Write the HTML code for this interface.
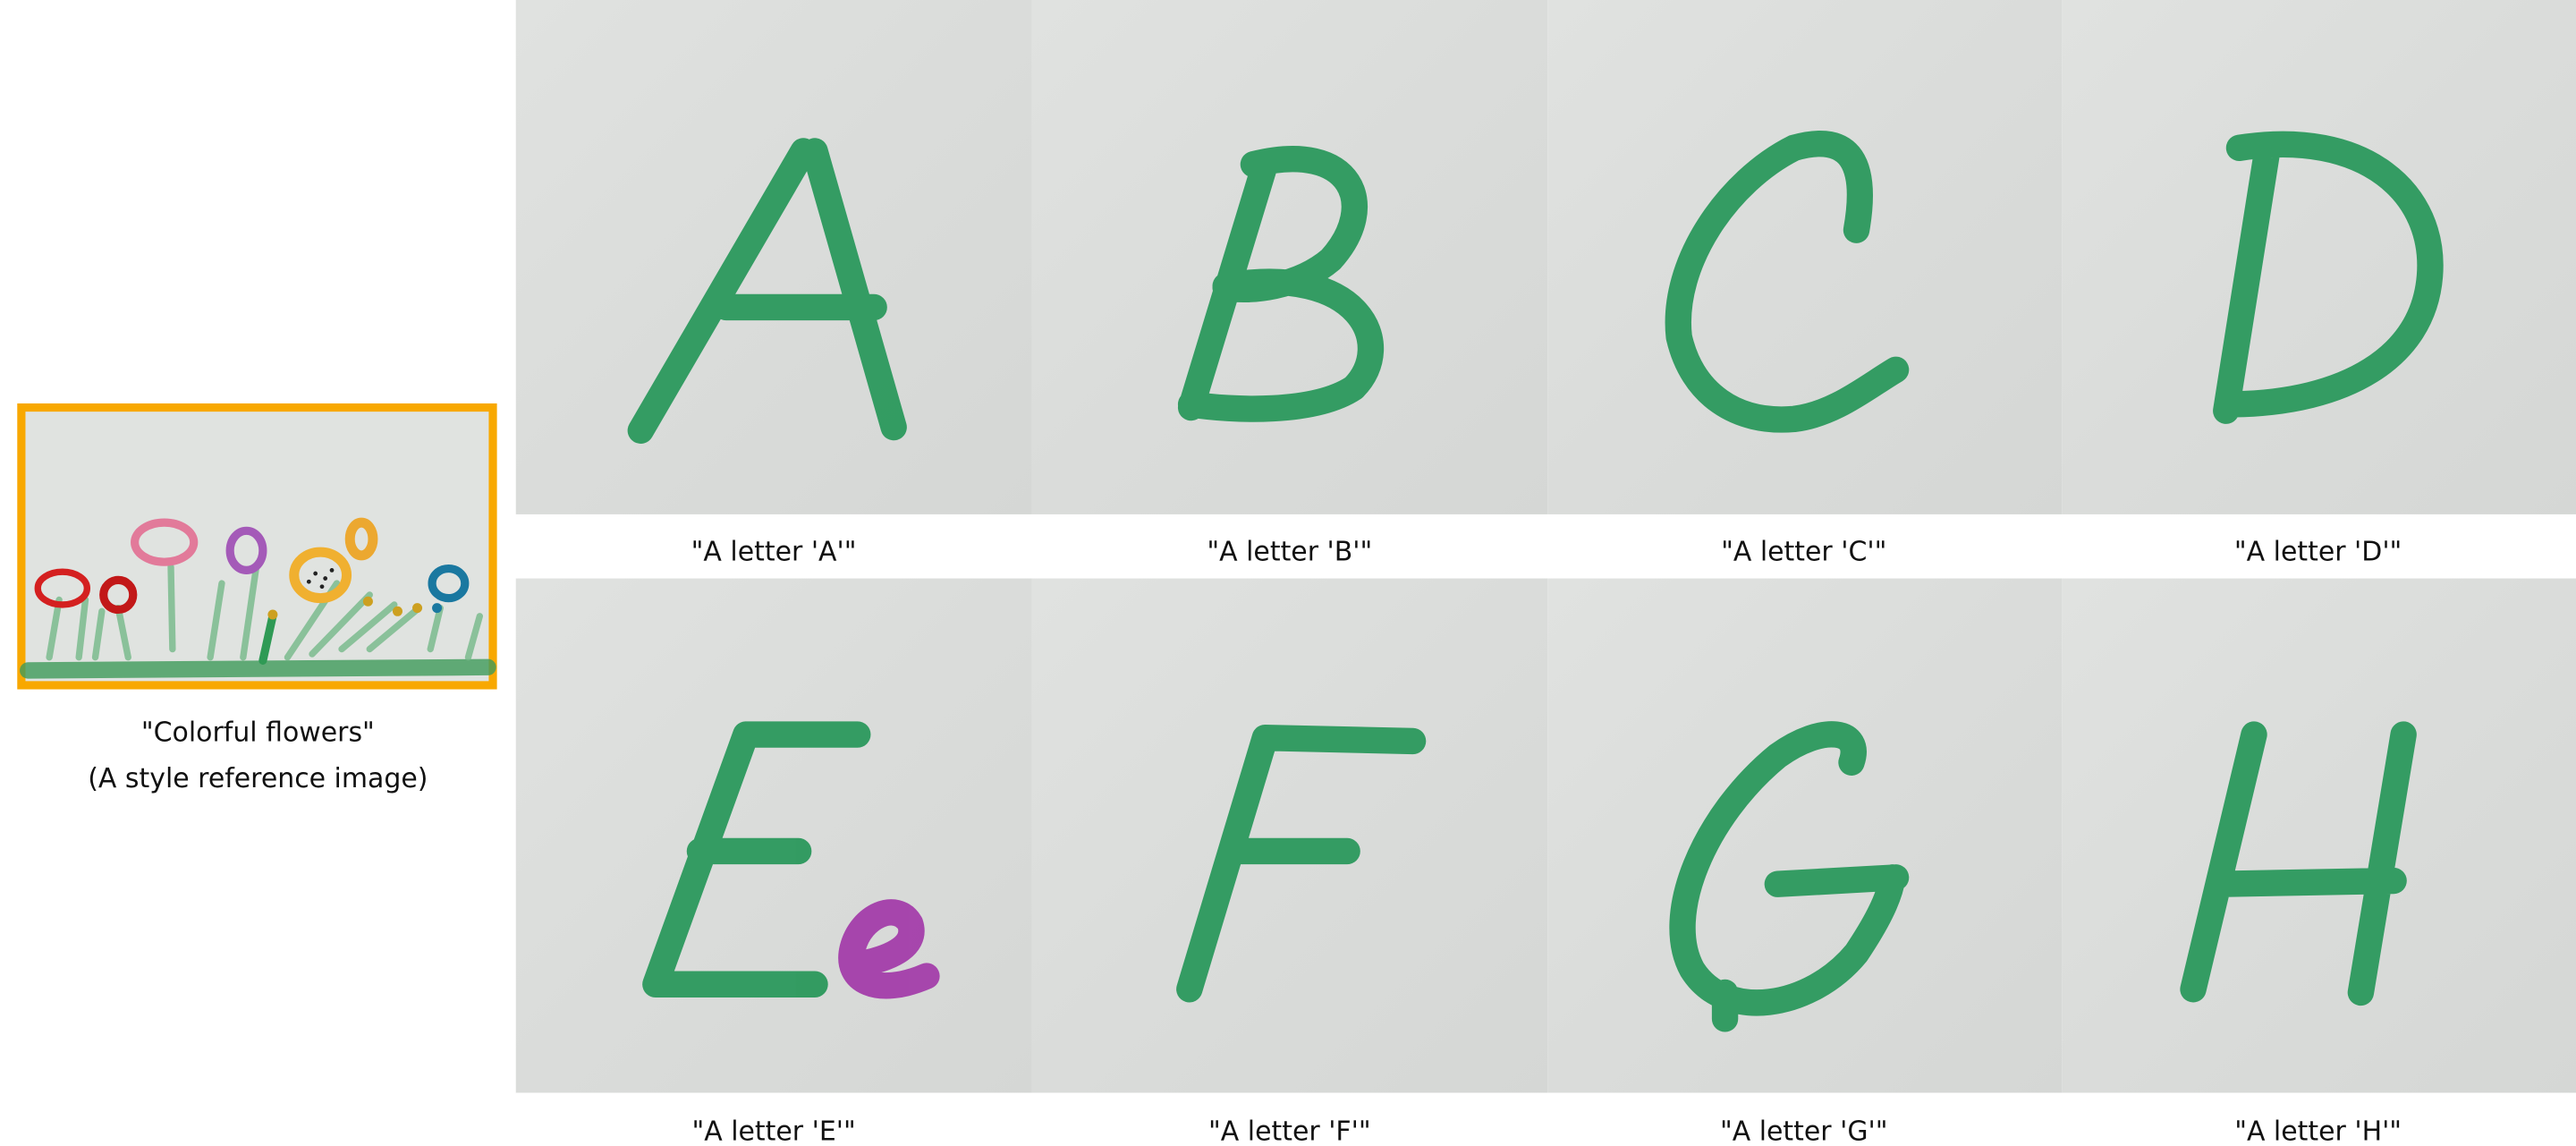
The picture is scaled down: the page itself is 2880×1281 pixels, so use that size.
<!DOCTYPE html>
<html><head><meta charset="utf-8"><style>
html,body{margin:0;padding:0;background:#fff;width:2880px;height:1281px;overflow:hidden}
svg{display:block}
text{font-family:"DejaVu Sans","Liberation Sans",sans-serif;font-size:16.3px;fill:#111}
.g{fill:none;stroke:#279759;stroke-width:16;stroke-linecap:round;stroke-linejoin:round;opacity:.93}
</style></head><body>
<svg width="2880" height="1281" viewBox="0 0 1568 697.4" preserveAspectRatio="none">
<defs>
<linearGradient id="pap" x1="0" y1="0" x2="1" y2="1"><stop offset="0" stop-color="#e0e2e0"/><stop offset=".5" stop-color="#dadcda"/><stop offset="1" stop-color="#d5d7d5"/></linearGradient>
</defs>
<g fill="url(#pap)">
<rect x="314" y="0" width="314" height="313"/><rect x="628" y="0" width="314" height="313"/><rect x="942" y="0" width="313" height="313"/><rect x="1255" y="0" width="313" height="313"/>
<rect x="314" y="352" width="314" height="313"/><rect x="628" y="352" width="314" height="313"/><rect x="942" y="352" width="313" height="313"/><rect x="1255" y="352" width="313" height="313"/>
</g>
<g class="g" transform="translate(314,0)">
<path d="M175,92 L76,262 M182,92 L230,260 M128,187 L218,187"/></g>
<g class="g" transform="translate(628,0)">
<path d="M142,100 L97,248 M135,100 C195,85 212,125 182,158 C162,175 132,178 118,175 M118,174 C200,160 222,210 196,236 C172,252 122,250 97,246"/></g>
<g class="g" transform="translate(942,0)">
<path d="M188,140 C195,100 185,80 150,90 C110,110 75,160 80,205 C88,240 115,258 150,255 C175,252 195,235 212,225"/></g>
<g class="g" transform="translate(1255,0)">
<path d="M125,92 L100,250 M108,90 C185,78 228,118 224,168 C220,218 172,245 105,246"/></g>
<g class="g" transform="translate(314,352)">
<path d="M140,95 L85,247 M140,95 L208,95 M112,166 L172,166 M85,247 L182,247"/>
<path d="M208,235 C225,232 245,225 240,210 C232,196 210,205 205,225 C200,245 220,255 250,242" style="stroke:#a33aa9"/></g>
<g class="g" transform="translate(628,352)">
<path d="M142,97 L96,250 M142,97 L232,99 M122,166 L192,166"/></g>
<g class="g" transform="translate(942,352)">
<path d="M185,112 C192,92 168,88 140,108 C95,145 70,205 88,238 C108,270 160,262 188,228 C200,210 208,195 210,182 M140,186 L212,182 M108,252 L108,268"/></g>
<g class="g" transform="translate(1255,352)">
<path d="M117,95 L80,250 M208,95 L182,252 M96,186 L202,184"/></g>
<g text-anchor="middle">
<text x="471" y="341">"A letter 'A'"</text><text x="785" y="341">"A letter 'B'"</text><text x="1098" y="341">"A letter 'C'"</text><text x="1411" y="341">"A letter 'D'"</text>
<text x="471" y="694">"A letter 'E'"</text><text x="785" y="694">"A letter 'F'"</text><text x="1098" y="694">"A letter 'G'"</text><text x="1411" y="694">"A letter 'H'"</text>
<text x="157" y="451">"Colorful flowers"</text><text x="157" y="479">(A style reference image)</text>
</g>
<rect x="13" y="248" width="287" height="169" fill="#e0e3e0" stroke="#f8a800" stroke-width="5"/>
<g fill="none" stroke-linecap="round">
<path d="M17,408 L297,406" stroke="#3f9a5a" stroke-width="10" opacity=".8"/>
<g stroke="#74b888" stroke-width="4" opacity=".8">
<path d="M30,400 L36,365 M48,400 L52,365 M58,400 L62,372 M78,400 L72,370 M105,395 L104,345 M128,400 L135,355 M148,400 L156,345 M175,400 L205,355 M190,398 L225,362 M208,395 L240,368 M225,395 L255,370 M262,395 L268,370 M285,400 L292,375"/>
</g>
<path d="M160,402 L166,375" stroke="#2f9a55" stroke-width="5"/>
<ellipse cx="38" cy="358" rx="15" ry="10" stroke="#d42020" stroke-width="4"/>
<ellipse cx="72" cy="362" rx="9" ry="9" stroke="#c21818" stroke-width="5"/>
<ellipse cx="100" cy="330" rx="18" ry="12" stroke="#e27a9a" stroke-width="5"/>
<ellipse cx="150" cy="335" rx="10" ry="12" stroke="#a45ab8" stroke-width="5"/>
<ellipse cx="195" cy="350" rx="16" ry="14" stroke="#f0b030" stroke-width="6"/>
<ellipse cx="220" cy="328" rx="7" ry="10" stroke="#eca830" stroke-width="6"/>
<ellipse cx="273" cy="355" rx="10" ry="9" stroke="#1a78a0" stroke-width="5"/>
</g>
<g fill="#cda020"><circle cx="166" cy="374" r="3"/><circle cx="224" cy="366" r="3"/><circle cx="242" cy="372" r="3"/><circle cx="254" cy="370" r="3"/></g>
<circle cx="266" cy="370" r="3" fill="#1a78a0"/>
<g fill="#222"><circle cx="192" cy="349" r="1.3"/><circle cx="198" cy="352" r="1.3"/><circle cx="188" cy="354" r="1.3"/><circle cx="202" cy="347" r="1.3"/><circle cx="196" cy="357" r="1.3"/></g>
</svg>
</body></html>
